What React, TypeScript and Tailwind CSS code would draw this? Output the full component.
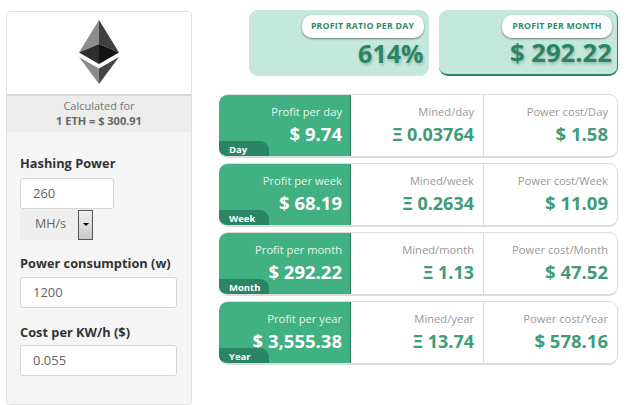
const rows = [
  { tag: 'Day', profit: 'Profit per day', value: '$ 9.74', minedLabel: 'Mined/day', mined: 'Ξ 0.03764', costLabel: 'Power cost/Day', cost: '$ 1.58' },
  { tag: 'Week', profit: 'Profit per week', value: '$ 68.19', minedLabel: 'Mined/week', mined: 'Ξ 0.2634', costLabel: 'Power cost/Week', cost: '$ 11.09' },
  { tag: 'Month', profit: 'Profit per month', value: '$ 292.22', minedLabel: 'Mined/month', mined: 'Ξ 1.13', costLabel: 'Power cost/Month', cost: '$ 47.52' },
  { tag: 'Year', profit: 'Profit per year', value: '$ 3,555.38', minedLabel: 'Mined/year', mined: 'Ξ 13.74', costLabel: 'Power cost/Year', cost: '$ 578.16' },
];

function EthLogo() {
  return (
    <svg width="40" height="64" viewBox="0 0 40 64">
      <polygon points="20,0 0,32.5 20,24" fill="#8c8c8c" />
      <polygon points="20,0 40,32.5 20,24" fill="#3f3f3f" />
      <polygon points="0,32.5 20,24 20,44" fill="#2e2e2e" />
      <polygon points="40,32.5 20,24 20,44" fill="#141414" />
      <polygon points="0,37 20,48.5 20,64" fill="#8c8c8c" />
      <polygon points="40,37 20,48.5 20,64" fill="#454545" />
    </svg>
  );
}

function Field({ value, className }: { value: string; className: string }) {
  return (
    <div className={`flex h-[31px] items-center rounded-[3px] border border-[#d5d5d5] bg-white pl-[12px] text-[13px] text-[#666] ${className}`}>
      {value}
    </div>
  );
}

function TopCard({ label, value, edge, labelWidth, valueSize }: { label: string; value: string; edge: string; labelWidth: string; valueSize: string }) {
  return (
    <div className={`flex h-[66px] w-[180px] flex-col items-end rounded-[9px] bg-[#c4e8db] pt-[5px] pr-[5px] ${edge}`}>
      <div className={`flex h-[23px] items-center justify-center rounded-[10px] bg-white text-[8.8px] font-bold tracking-[0.2px] text-[#2e8b6a] shadow-[0_1px_2px_rgba(0,0,0,0.45)] ${labelWidth}`}>
        {label}
      </div>
      <div className={`-mt-[1px] leading-[32px] font-bold text-[#2a8566] [text-shadow:1px_2px_3px_rgba(0,0,0,0.2)] ${valueSize}`}>{value}</div>
    </div>
  );
}

export default function App() {
  return (
    <div className="flex h-[405px] w-[642px] overflow-hidden bg-white pt-[10px] pl-[6px] font-['Open_Sans',sans-serif]">
      <div className="mt-px h-[394px] w-[186px] overflow-hidden rounded-[4px] border border-[#e0e0e0] bg-[#f5f5f5]">
        <div className="flex h-[82px] justify-center bg-white pt-[8px]">
          <EthLogo />
        </div>
        <div className="h-[38px] border-t-2 border-[#d8d8d8] bg-[#ececec] pt-[2px] text-center text-[11px] leading-[15px] text-[#777]">
          <div>Calculated for</div>
          <div className="font-bold text-[#666]">1 ETH = $ 300.91</div>
        </div>
        <div className="pt-[21px] pl-[13px]">
          <div className="text-[12.8px] leading-[20px] font-bold text-[#333]">Hashing Power</div>
          <Field value="260" className="mt-[5px] w-[94px]" />
          <div className="flex h-[31px] w-[73px] items-center justify-between bg-[#efefef] pl-[15px] text-[12.5px] text-[#666]">
            <span>MH/s</span>
            <div className="flex h-[30px] w-[15px] items-center justify-center border border-[#555] bg-gradient-to-b from-[#f2f2f2] to-[#c8c8c8]">
              <div className="h-0 w-0 border-x-[3px] border-t-[3px] border-x-transparent border-t-black" />
            </div>
          </div>
          <div className="mt-[13px] text-[12.8px] leading-[20px] font-bold text-[#333]">Power consumption (w)</div>
          <Field value="1200" className="mt-[4px] w-[157px]" />
          <div className="mt-[14px] text-[12.8px] leading-[20px] font-bold text-[#333]">Cost per KW/h ($)</div>
          <Field value="0.055" className="mt-[3px] w-[157px]" />
        </div>
      </div>
      <div className="ml-[27px] w-[399px]">
        <div className="flex justify-end gap-[10px] pl-[30px]">
          <TopCard label="PROFIT RATIO PER DAY" value="614%" edge="" labelWidth="w-[122px]" valueSize="text-[25px]" />
          <TopCard label="PROFIT PER MONTH" value="$ 292.22" edge="border-r border-b-2 border-[#2a8566]" labelWidth="w-[110px]" valueSize="text-[25.7px]" />
        </div>
        <div className="mt-[18px] flex flex-col gap-[5px]">
          {rows.map((row) => (
            <div key={row.tag} className="flex h-[64px] overflow-hidden rounded-[9px] border-t border-r border-b-2 border-[#dcdcdc] bg-white">
              <div className="relative -mt-px h-[64px] w-[132px] overflow-hidden rounded-l-[9px] border-r border-b border-[#2a7d60] bg-[#41b083] pt-[9px] pr-[8px] text-right text-white">
                <div className="text-[11.2px] leading-[18px] text-[#e6f5ef]">{row.profit}</div>
                <div className="mt-[1px] text-[18.5px] leading-[24px] font-bold">{row.value}</div>
                <div className="absolute bottom-0 left-0 h-[16px] w-[50px] rounded-tr-[9px] bg-[#2a8566] pl-[10px] text-left text-[9.5px] leading-[17px] font-bold">
                  {row.tag}
                </div>
              </div>
              <div className="w-[133px] border-r border-[#dcdcdc] pt-[8px] pr-[9px] text-right">
                <div className="text-[11.2px] leading-[18px] text-[#999]">{row.minedLabel}</div>
                <div className="mt-[1px] text-[18px] leading-[24px] font-bold text-[#3f9b79]">{row.mined}</div>
              </div>
              <div className="flex-1 pt-[8px] pr-[9px] text-right">
                <div className="text-[11.2px] leading-[18px] text-[#999]">{row.costLabel}</div>
                <div className="mt-[1px] text-[18.5px] leading-[24px] font-bold text-[#3f9b79]">{row.cost}</div>
              </div>
            </div>
          ))}
        </div>
      </div>
    </div>
  );
}
